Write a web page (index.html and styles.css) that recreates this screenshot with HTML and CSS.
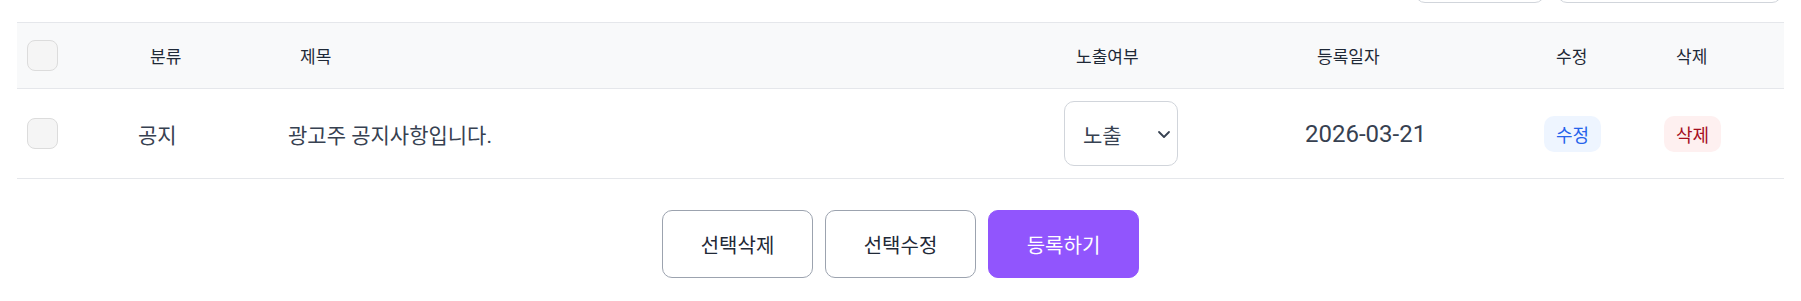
FILE: index.html
```html
<!DOCTYPE html>
<html lang="ko">
<head>
<meta charset="utf-8">
<title>공지사항 관리</title>
<link rel="stylesheet" href="styles.css">
</head>
<body>
<div class="page">
  <div class="toolbar">
    <div class="tool-box tool-small"></div>
    <div class="tool-box tool-wide"></div>
  </div>
  <div class="table">
    <div class="row head">
      <div class="cell"><span class="check"></span></div>
      <div class="cell">분류</div>
      <div class="cell">제목</div>
      <div class="cell">노출여부</div>
      <div class="cell">등록일자</div>
      <div class="cell">수정</div>
      <div class="cell">삭제</div>
    </div>
    <div class="row body">
      <div class="cell"><span class="check"></span></div>
      <div class="cell">공지</div>
      <div class="cell">광고주 공지사항입니다.</div>
      <div class="cell">
        <div class="select">
          <span>노출</span>
          <svg class="chev" width="14" height="9" viewBox="0 0 14 9"><path d="M2 2 L7 7 L12 2" fill="none" stroke="#374151" stroke-width="1.8" stroke-linecap="round" stroke-linejoin="round"/></svg>
        </div>
      </div>
      <div class="cell date">2026-03-21</div>
      <div class="cell"><span class="badge edit">수정</span></div>
      <div class="cell"><span class="badge del">삭제</span></div>
    </div>
  </div>
  <div class="actions">
    <button class="btn">선택삭제</button>
    <button class="btn">선택수정</button>
    <button class="btn primary">등록하기</button>
  </div>
</div>
</body>
</html>
```

FILE: styles.css
```css
* { box-sizing: border-box; }
html, body { margin: 0; padding: 0; background: #fff; }
body {
  font-family: Roboto, "Noto Sans CJK KR", sans-serif;
  color: #374151;
  overflow: hidden;
}
.page { padding: 0 17px; }

.toolbar {
  display: flex;
  justify-content: flex-end;
  gap: 12px;
  height: 3px;
  padding-right: 2px;
}
.tool-box {
  height: 40px;
  margin-top: -37px;
  border: 1px solid #d1d5db;
  border-radius: 10px;
  background: #fff;
}
.tool-small { width: 130px; }
.tool-wide { width: 225px; }

.table { margin-top: 19px; }
.row {
  display: grid;
  grid-template-columns: 111px 150px 776px 241px 239px 120px 130px;
  align-items: center;
  border-bottom: 1px solid #e5e7eb;
}
.head {
  height: 67px;
  background: #f8f9fa;
  border-top: 1px solid #e5e7eb;
  font-size: 17px;
  color: #1f2937;
}
.head .cell { padding-left: 22px; }
.head .cell:first-child { padding-left: 10px; }
.body {
  height: 90px;
  font-size: 21px;
  color: #374151;
}
.cell { padding-left: 10px; white-space: nowrap; display: flex; align-items: center; }

.check {
  display: block;
  width: 31px;
  height: 31px;
  border: 1px solid #dcdcdc;
  border-radius: 8px;
  background: #f5f5f5;
}

.select {
  position: relative;
  width: 114px;
  height: 65px;
  border: 1px solid #d1d5db;
  border-radius: 10px;
  display: flex;
  align-items: center;
  padding-left: 18px;
  font-size: 21px;
  color: #374151;
}
.chev { position: absolute; right: 6px; top: 28px; }

.date { font-size: 24px; color: #374151; }

.badge {
  display: inline-flex;
  align-items: center;
  justify-content: center;
  width: 57px;
  height: 36px;
  border-radius: 10px;
  font-size: 18px;
}
.badge.edit { background: #eef5ff; color: #2563eb; }
.badge.del { background: #fef0f0; color: #a50e1e; }

.actions {
  display: flex;
  justify-content: center;
  gap: 12px;
  margin-top: 31px;
}
.btn {
  width: 151px;
  height: 68px;
  border: 1px solid #9ca3af;
  border-radius: 10px;
  background: #fff;
  font-family: Roboto, "Noto Sans CJK KR", sans-serif;
  font-size: 20px;
  color: #1f2937;
  cursor: pointer;
}
.btn.primary { background: #9155fd; border-color: #9155fd; color: #fff; }
```
